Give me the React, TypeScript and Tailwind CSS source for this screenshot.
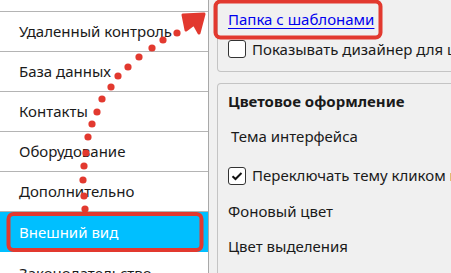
import React from "react";

const font = { fontFamily: '"Noto Sans", "Open Sans", sans-serif' };

const rows = [
  "Удаленный контроль",
  "База данных",
  "Контакты",
  "Оборудование",
  "Дополнительно",
];

const dots: [number, number][] = [
  [177, 33], [163, 40], [152, 48], [139, 57], [128, 67], [118, 76], [111, 87],
  [102, 99], [97, 112], [92, 124], [88, 137], [86, 153], [84, 166], [83, 180],
  [84, 196], [85, 209],
];

export default function App() {
  return (
    <div className="relative w-[451px] h-[273px] overflow-hidden bg-[#f0f0f0] text-[15px] text-[#1a1a1a]" style={font}>
      <div className="flex h-full">
        {/* left list */}
        <div className="w-[209px] shrink-0 bg-white border-r border-[#a8a8a8] flex flex-col">
          <div className="h-[12px] shrink-0 border-b border-[#b4b4b4]" />
          {rows.map((r) => (
            <div key={r} className="h-[40px] shrink-0 border-b border-[#b4b4b4] flex items-center pl-[19px]">
              {r}
            </div>
          ))}
          <div className="h-[40px] shrink-0 bg-[#00bfff] text-white flex items-center pl-[19px]">
            Внешний вид
          </div>
          <div className="h-[40px] shrink-0 flex items-center pl-[19px] pt-[2px]">
            Законодательство
          </div>
        </div>
        {/* right panel */}
        <div className="flex-1 pl-[8px] flex flex-col">
          <div className="w-[300px] h-[72px] shrink-0 border border-t-0 border-[#c4c4c4] rounded-b-[4px] flex flex-col pl-[10px]">
            <div className="h-[38px] flex items-center">
              <span className="text-[#0000ee] underline underline-offset-[3px]">Папка с шаблонами</span>
            </div>
            <div className="flex items-center gap-[6px] whitespace-nowrap">
              <span className="w-[18px] h-[18px] rounded-[3px] border border-[#333] bg-white shrink-0" />
              <span>Показывать дизайнер для шаблонов</span>
            </div>
          </div>
          <div className="mt-[11px] w-[300px] flex-1 border border-b-0 border-[#c4c4c4] rounded-t-[4px] pl-[10px] flex flex-col whitespace-nowrap">
            <div className="h-[33px] flex items-center pt-[1px] font-bold">Цветовое оформление</div>
            <div className="h-[39px] flex items-center pl-[3px]">Тема интерфейса</div>
            <div className="h-[39px] flex items-center gap-[6px]">
              <span className="w-[18px] h-[18px] rounded-[3px] border border-[#333] bg-white shrink-0 flex items-center justify-center">
                <svg width="12" height="10" viewBox="0 0 12 10">
                  <path d="M1.5 5.2 L4.5 8 L10.5 2" fill="none" stroke="#111" strokeWidth="2" />
                </svg>
              </span>
              <span>Переключать тему кликом на логотип</span>
            </div>
            <div className="h-[33px] flex items-center">Фоновый цвет</div>
            <div className="h-[36px] flex items-center">Цвет выделения</div>
          </div>
        </div>
      </div>

      {/* annotations */}
      <svg className="absolute inset-0 pointer-events-none" width="451" height="273" viewBox="0 0 451 273">
        <rect x="215.5" y="1.5" width="165" height="36" rx="5" fill="none" stroke="#e2392f" strokeWidth="4" />
        <rect x="8.5" y="214" width="193" height="36" rx="5" fill="none" stroke="#e2392f" strokeWidth="4" />
        {dots.map(([x, y], i) => (
          <circle key={i} cx={x} cy={y} r="3.6" fill="#e2392f" />
        ))}
        <path d="M183 15 L204 14 L199 33 L194 24 L186 30 Z" fill="#e2392f" stroke="#e2392f" strokeWidth="3" strokeLinejoin="round" />
      </svg>
    </div>
  );
}
